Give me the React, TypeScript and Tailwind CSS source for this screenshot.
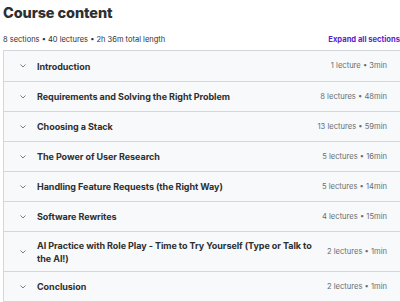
import React from 'react';

const sections = [
  { title: 'Introduction', meta: '1 lecture • 3min' },
  { title: 'Requirements and Solving the Right Problem', meta: '8 lectures • 48min' },
  { title: 'Choosing a Stack', meta: '13 lectures • 59min' },
  { title: 'The Power of User Research', meta: '5 lectures • 16min' },
  { title: 'Handling Feature Requests (the Right Way)', meta: '5 lectures • 14min' },
  { title: 'Software Rewrites', meta: '4 lectures • 15min' },
  { title: 'AI Practice with Role Play - Time to Try Yourself (Type or Talk to the AI!)', meta: '2 lectures • 1min' },
  { title: 'Conclusion', meta: '2 lectures • 1min' },
];

const Chevron: React.FC = () => (
  <svg width="6" height="4" viewBox="0 0 12 8" fill="none" className="shrink-0 text-[#6a6f73]">
    <path d="M1.5 1.5L6 6L10.5 1.5" stroke="currentColor" strokeWidth="1.8" strokeLinecap="round" strokeLinejoin="round" />
  </svg>
);

export default function App() {
  return (
    <div className="w-[400px] h-[302px] overflow-hidden bg-white pl-[3px] text-[#2d2f31]" style={{ fontFamily: 'Inter, "Noto Sans", sans-serif' }}>
      <h2 className="pt-[3px] text-[14.5px] font-extrabold leading-[20px] tracking-[-0.1px]">Course content</h2>
      <div className="mt-[11px] flex items-center justify-between">
        <span className="text-[7.5px] leading-[12px] text-[#2d2f31]">8 sections • 40 lectures • 2h 36m total length</span>
        <span className="text-[7.6px] font-bold leading-[12px] text-[#5624d0] whitespace-nowrap">Expand all sections</span>
      </div>
      <div className="mt-[4px] w-[399px] border border-[#d1d7dc]">
        {sections.map((s, i) => (
          <div
            key={s.title}
            className={`flex items-center bg-[#f7f9fa] pl-[16px] pr-[14px] ${i > 0 ? 'border-t border-[#d1d7dc]' : ''} ${s.title.length > 60 ? 'py-[6px] min-h-[40px]' : 'h-[30px]'}`}
          >
            <Chevron />
            <span className="ml-[11px] flex-1 text-[9px] font-bold leading-[13px] tracking-[-0.05px] text-[#2d2f31] pr-[4px]">{s.title}</span>
            <span className="text-[7.6px] leading-[12px] text-[#6a6f73] whitespace-nowrap">{s.meta}</span>
          </div>
        ))}
      </div>
    </div>
  );
}
